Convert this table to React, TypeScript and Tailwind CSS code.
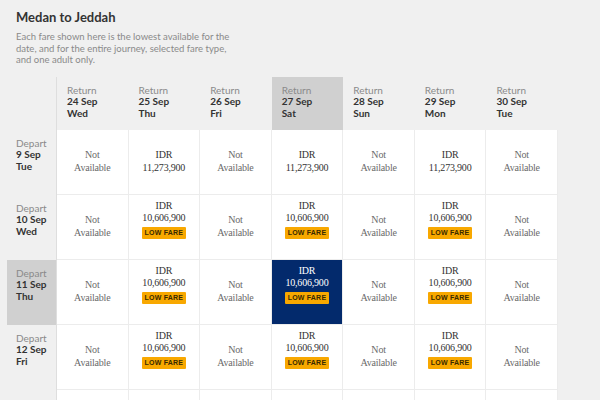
const returns = [
  { date: "24 Sep", day: "Wed" },
  { date: "25 Sep", day: "Thu" },
  { date: "26 Sep", day: "Fri" },
  { date: "27 Sep", day: "Sat" },
  { date: "28 Sep", day: "Sun" },
  { date: "29 Sep", day: "Mon" },
  { date: "30 Sep", day: "Tue" },
];

type Fare = { price: string; low?: boolean } | null;

const lowRow: Fare[] = [
  null,
  { price: "10,606,900", low: true },
  null,
  { price: "10,606,900", low: true },
  null,
  { price: "10,606,900", low: true },
  null,
];

const rows: { date: string; day: string; fares: Fare[] }[] = [
  {
    date: "9 Sep",
    day: "Tue",
    fares: [null, { price: "11,273,900" }, null, { price: "11,273,900" }, null, { price: "11,273,900" }, null],
  },
  { date: "10 Sep", day: "Wed", fares: lowRow },
  { date: "11 Sep", day: "Thu", fares: lowRow },
  { date: "12 Sep", day: "Fri", fares: lowRow },
];

const SEL_COL = 3;
const SEL_ROW = 2;

function FareCell({ fare, selected }: { fare: Fare; selected: boolean }) {
  return (
    <div
      className={`flex h-[65px] flex-col items-center justify-center border-b border-r border-[#ececec] text-center font-['Liberation_Serif',serif] text-[10px] leading-[12.5px] tracking-[-0.2px] ${
        selected ? "bg-[#032a6c] text-white" : "bg-white text-[#6a6a6a]"
      }`}
    >
      {fare ? (
        <div className={`flex flex-col items-center ${fare.low ? "mb-[15px]" : ""}`}>
          <div className={selected ? "text-white" : "text-[#333]"}>IDR</div>
          <div className={selected ? "text-white" : "text-[#333]"}>{fare.price}</div>
          {fare.low && (
            <div className="mt-[2px] w-[44px] rounded-[1px] bg-[#f8a800] py-[1px] font-['Liberation_Sans',sans-serif] text-[7px] font-bold leading-[10px] tracking-[0.2px] text-[#3a2a00]">
              LOW FARE
            </div>
          )}
        </div>
      ) : (
        <>
          <div>Not</div>
          <div>Available</div>
        </>
      )}
    </div>
  );
}

export default function App() {
  return (
    <div className="h-[400px] w-[600px] overflow-hidden bg-[#f0f0f0] font-['Lato',sans-serif]">
      <div className="px-4 pt-[9px]">
        <h1 className="text-[13px] font-bold leading-[16px] text-[#333]">Medan to Jeddah</h1>
        <p className="mt-[6px] w-[220px] text-[9.5px] leading-[11.5px] text-[#8a8a8a]">
          Each fare shown here is the lowest available for the date, and for the entire journey, selected fare
          type, and one adult only.
        </p>
      </div>
      <div className="ml-[7px] mt-[11px] grid w-[551px] grid-cols-[50px_repeat(7,minmax(0,1fr))]">
        <div className="border-r border-[#dedede]" />
        {returns.map((r, i) => (
          <div
            key={r.date}
            className={`h-[53px] pl-[10px] pt-[8px] text-[10px] leading-[11.5px] ${i === SEL_COL ? "bg-[#d0d0d0]" : ""}`}
          >
            <div className="text-[#8a8a8a]">Return</div>
            <div className="font-bold text-[#333]">{r.date}</div>
            <div className="font-bold text-[#333]">{r.day}</div>
          </div>
        ))}
        {rows.map((row, ri) => (
          <div key={row.date} className="contents">
            <div
              className={`h-[65px] border-r border-[#dedede] pl-[9px] pt-[8px] text-[10px] leading-[11.5px] ${
                ri === SEL_ROW ? "bg-[#d0d0d0]" : ""
              }`}
            >
              <div className="text-[#8a8a8a]">Depart</div>
              <div className="font-bold text-[#333]">{row.date}</div>
              <div className="font-bold text-[#333]">{row.day}</div>
            </div>
            {row.fares.map((f, ci) => (
              <FareCell key={ci} fare={f} selected={ri === SEL_ROW && ci === SEL_COL} />
            ))}
          </div>
        ))}
        <div className="h-[65px] border-r border-[#dedede]" />
        {returns.map((r) => (
          <div key={r.date} className="h-[65px] border-r border-[#ececec] bg-white" />
        ))}
      </div>
    </div>
  );
}
